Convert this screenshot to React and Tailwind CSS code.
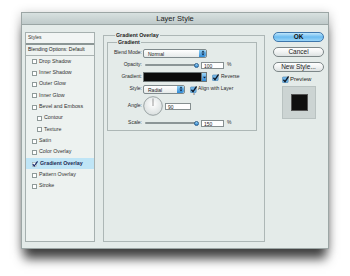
const items = [
  { label: 'Drop Shadow' },
  { label: 'Inner Shadow' },
  { label: 'Outer Glow' },
  { label: 'Inner Glow' },
  { label: 'Bevel and Emboss' },
  { label: 'Contour', indent: true },
  { label: 'Texture', indent: true },
  { label: 'Satin' },
  { label: 'Color Overlay' },
  { label: 'Gradient Overlay', checked: true, active: true },
  { label: 'Pattern Overlay' },
  { label: 'Stroke' },
]

function ListCheck({ checked }) {
  if (checked) {
    return (
      <svg width="6" height="6" viewBox="0 0 6 6" className="shrink-0">
        <rect x="0.5" y="1.5" width="4" height="4" fill="#fff" stroke="#8f9a99" strokeWidth="0.5" />
        <path d="M0.8 3.2 L2.2 5 L5.6 0.4" fill="none" stroke="#15296b" strokeWidth="1.2" />
      </svg>
    )
  }
  return <span className="shrink-0 w-[5px] h-[5px] border-[0.5px] border-[#8f9a99] bg-white" />
}

function AquaCheck() {
  return (
    <svg width="7" height="7" viewBox="0 0 7 7" className="shrink-0">
      <rect x="0.4" y="0.9" width="5.8" height="5.8" rx="1" fill="#72b6e8" stroke="#3d76a6" strokeWidth="0.5" />
      <path d="M1.4 3.8 L3 5.6 L6.6 0.4" fill="none" stroke="#0d1624" strokeWidth="1.3" />
    </svg>
  )
}

function Stepper() {
  return (
    <div className="w-[7px] h-full rounded-r-[2px] bg-gradient-to-b from-[#8fd0f4] to-[#2c8ad6] flex items-center justify-center">
      <svg width="4" height="6" viewBox="0 0 4 6">
        <path d="M0.5 2.4 L2 0.6 L3.5 2.4 Z M0.5 3.6 L2 5.4 L3.5 3.6 Z" fill="#0c2340" />
      </svg>
    </div>
  )
}

function Select({ width, value }) {
  return (
    <div className={`${width} h-[9px] rounded-[2px] border-[0.5px] border-[#7f8a8c] bg-gradient-to-b from-white to-[#e6eaea] flex items-stretch`}>
      <span className="flex-1 pl-[4px] text-[5px] leading-[8px] text-[#222]">{value}</span>
      <Stepper />
    </div>
  )
}

function Slider() {
  return (
    <div className="relative w-[54px] h-[6px] ml-[2px] flex items-center">
      <div className="w-[52px] h-[1.5px] bg-[#8b9596] rounded-full" />
      <span className="absolute left-[49px] top-[0.5px] w-[5px] h-[5px] rounded-full bg-gradient-to-b from-[#9ad6f6] to-[#2a86d2] border-[0.5px] border-[#2a5f8f]" />
    </div>
  )
}

function Field({ value, width = 'w-[23px]' }) {
  return (
    <div className={`${width} h-[7px] border-[0.5px] border-[#868f90] bg-white text-[5px] leading-[6px] pl-[2px] text-[#222]`}>
      {value}
    </div>
  )
}

function Row({ label, children, height = 'h-[10px]' }) {
  return (
    <div className={`flex items-center ${height}`}>
      <span className="w-[34px] text-right text-[5px] text-[#2a2a2a]">{label}</span>
      <div className="flex items-center ml-[1px]">{children}</div>
    </div>
  )
}

function Button({ children, primary }) {
  return (
    <div
      className={`h-[10px] rounded-full border-[0.5px] flex items-center justify-center text-[6.5px] ${
        primary
          ? 'border-[#3f77ab] bg-gradient-to-b from-[#bfe6fb] via-[#6bbcf0] to-[#9ad5f8] font-bold text-[#111]'
          : 'border-[#7d8788] bg-gradient-to-b from-white via-[#f1f3f3] to-[#dde2e2] text-[#1a1a1a]'
      }`}
    >
      {children}
    </div>
  )
}

export default function App() {
  return (
    <div className="w-[350px] h-[276px] bg-white overflow-hidden pt-[12px] pl-[21px] font-['Liberation_Sans',Arial,sans-serif]">
      <div className="w-[308px] h-[237px] bg-[#e4ebe9] border border-[#9ca6a5] shadow-[0_13px_10px_-3px_rgba(0,0,0,0.7),0_2px_10px_rgba(0,0,0,0.25)] flex flex-col">
        <div className="h-[12px] shrink-0 bg-gradient-to-b from-[#d8e1e0] to-[#bfcaca] border-b border-[#9aa5a4] flex items-center justify-center text-[7.5px] text-[#1c1c1c]">
          Layer Style
        </div>

        <div className="flex-1 flex pl-[3px] pt-[7px] pb-[6px] pr-[4px]">
          {/* styles list */}
          <div className="w-[70px] border-[0.5px] border-[#a6b0af] bg-[#edf2f0] flex flex-col">
            <div className="h-[10px] flex items-center pl-[2px] text-[5px] text-[#333] bg-[#f2f5f4]">Styles</div>
            <div className="h-[2px] bg-[#8c9695]" />
            <div className="h-[11px] flex items-center pl-[2px] text-[5px] text-[#222] border-b-[0.5px] border-[#aab3b2]">
              Blending Options: Default
            </div>
            {items.map((it) => (
              <div
                key={it.label}
                className={`h-[11.35px] flex items-center gap-[2px] text-[5.3px] ${it.indent ? 'pl-[11px]' : 'pl-[6px]'} ${
                  it.active ? 'bg-[#bfe5f6] font-bold text-[#1b2a55]' : 'text-[#333]'
                }`}
              >
                <ListCheck checked={it.checked} />
                <span>{it.label}</span>
              </div>
            ))}
          </div>

          {/* settings */}
          <fieldset className="ml-[8px] w-[162px] border-[0.5px] border-[#adb7b6] px-[3px] min-w-0">
            <legend className="ml-[8px] px-[1px] text-[5.3px] font-bold text-[#222] leading-[6px]">Gradient Overlay</legend>
            <fieldset className="mt-[1px] w-[150px] border-[0.5px] border-[#adb7b6] pt-[3px] pb-[2px] flex flex-col gap-[2px]">
              <legend className="ml-[9px] px-[1px] text-[5.3px] font-bold text-[#222] leading-[6px]">Gradient</legend>
              <Row label="Blend Mode:">
                <Select width="w-[64px]" value="Normal" />
              </Row>
              <Row label="Opacity:">
                <Slider />
                <div className="ml-[2px]">
                  <Field value="100" />
                </div>
                <span className="ml-[3px] text-[5px] text-[#333]">%</span>
              </Row>
              <Row label="Gradient:">
                <div className="w-[59px] h-[10px] border-[0.5px] border-[#6e7778] bg-[#0b0b0b]" />
                <div className="w-[5px] h-[10px] border-[0.5px] border-l-0 border-[#6e7778] bg-gradient-to-b from-[#9bd5f6] to-[#2d8ad6] flex items-center justify-center">
                  <svg width="3" height="3" viewBox="0 0 3 3">
                    <path d="M0 0.8 L3 0.8 L1.5 2.6 Z" fill="#0c2340" />
                  </svg>
                </div>
                <div className="ml-[5px]">
                  <AquaCheck />
                </div>
                <span className="ml-[2px] text-[5px] text-[#2a2a2a]">Reverse</span>
              </Row>
              <Row label="Style:">
                <Select width="w-[42px]" value="Radial" />
                <div className="ml-[5px]">
                  <AquaCheck />
                </div>
                <span className="ml-[1px] text-[5px] text-[#2a2a2a]">Align with Layer</span>
              </Row>
              <Row label="Angle:" height="h-[20px]">
                <svg width="20" height="20" viewBox="0 0 20 20">
                  <defs>
                    <radialGradient id="dial" cx="0.5" cy="0.4" r="0.6">
                      <stop offset="0" stopColor="#ffffff" />
                      <stop offset="1" stopColor="#d9dfdf" />
                    </radialGradient>
                  </defs>
                  <circle cx="10" cy="10" r="9.3" fill="url(#dial)" stroke="#7b8586" strokeWidth="0.7" />
                  <line x1="10" y1="10" x2="10" y2="2.5" stroke="#555" strokeWidth="0.6" />
                </svg>
                <div className="ml-[2px]">
                  <Field value="90" width="w-[26px]" />
                </div>
                <span className="ml-[2px] text-[5px] text-[#333] self-start -mt-[4px]">°</span>
              </Row>
              <Row label="Scale:">
                <Slider />
                <div className="ml-[2px]">
                  <Field value="150" />
                </div>
                <span className="ml-[3px] text-[5px] text-[#333]">%</span>
              </Row>
            </fieldset>
          </fieldset>

          {/* buttons */}
          <div className="ml-[8px] w-[51px] flex flex-col">
            <Button primary>OK</Button>
            <div className="mt-[5px]">
              <Button>Cancel</Button>
            </div>
            <div className="mt-[5px]">
              <Button>New Style...</Button>
            </div>
            <div className="mt-[3px] h-[8px] flex items-center pl-[9px] gap-[1px]">
              <AquaCheck />
              <span className="text-[6px] text-[#222]">Preview</span>
            </div>
            <div className="mt-[3px] ml-[9px] w-[34px] h-[33px] bg-[#ccd4d3] border-[0.5px] border-[#b9c2c1] flex items-center justify-center">
              <div className="w-[17px] h-[17px] bg-[#0f0f0f] border-[0.5px] border-[#555]" />
            </div>
          </div>
        </div>
      </div>
    </div>
  )
}
